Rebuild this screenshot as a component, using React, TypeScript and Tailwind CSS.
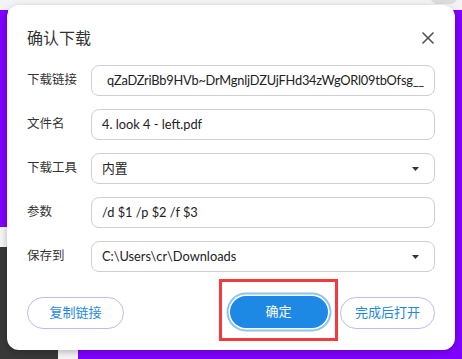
import React from "react";

const font = { fontFamily: '"Noto Sans", "Noto Sans CJK SC", sans-serif' };
const inputFont = { fontFamily: 'Lato, "Noto Sans CJK SC", sans-serif' };

function Caret() {
  return (
    <svg width="7" height="4" viewBox="0 0 7 4" className="shrink-0">
      <path d="M0 0 L7 0 L3.5 4 Z" fill="#333" />
    </svg>
  );
}

function Field({ label, children }: { label: string; children: React.ReactNode }) {
  return (
    <div className="flex items-center">
      <div className="w-[64px] shrink-0 text-[12.5px] text-[#333]">{label}</div>
      <div
        className="flex h-[31px] min-w-0 flex-1 items-center overflow-hidden rounded-[8px] border border-[#cfcfcf] bg-white px-[10px] text-[12.8px] text-[#222]"
        style={inputFont}
      >
        {children}
      </div>
    </div>
  );
}

export default function App() {
  return (
    <div className="relative h-[359px] w-[462px] overflow-hidden bg-[#f3f3f5]" style={font}>
      {/* background windows */}
      <div className="absolute left-0 top-[10px] h-[217px] w-[8px] bg-[#7f00ff]" />
      <div className="absolute left-0 top-[247px] h-[112px] w-[8px] bg-[#383838]" />
      <div className="absolute right-0 top-[10px] h-[349px] w-[10px] bg-[#7f00ff]" />
      <div className="absolute bottom-0 left-[78px] h-[14px] w-[384px] bg-[#7f00ff]" />
      <div className="absolute bottom-0 left-0 h-[30px] w-[58px] bg-[#383838]" />
      <div className="absolute left-[430px] top-[-12px] h-[16px] w-[28px] rounded-full bg-[#dcdcdc]" />

      {/* dialog */}
      <div className="absolute left-[7px] top-[5px] flex h-[345px] w-[448px] flex-col rounded-[12px] bg-white px-[20px] pt-[22px] shadow-[0_2px_6px_rgba(0,0,0,0.25)]">
        <div className="flex h-[22px] items-center justify-between">
          <div className="text-[16px] text-[#333]">确认下载</div>
          <svg width="20" height="20" viewBox="0 0 24 24" fill="none" stroke="#555" strokeWidth="2" strokeLinecap="round" className="mr-[-3px]">
            <path d="M18 6 6 18" />
            <path d="m6 6 12 12" />
          </svg>
        </div>

        <div className="mt-[16px] flex flex-col gap-[13px]">
          <Field label="下载链接">
            <div className="flex w-full justify-end overflow-hidden whitespace-nowrap">
              <span className="tracking-[-0.2px]">qZaDZriBb9HVb~DrMgnljDZUjFHd34zWgORl09tbOfsg__</span>
            </div>
          </Field>
          <Field label="文件名">
            <span>4. look 4 - left.pdf</span>
          </Field>
          <Field label="下载工具">
            <span className="flex-1">内置</span>
            <span className="mr-[5px]"><Caret /></span>
          </Field>
          <Field label="参数">
            <span>/d $1 /p $2 /f $3</span>
          </Field>
          <Field label="保存到">
            <span className="flex-1">C:\Users\cr\Downloads</span>
            <span className="mr-[5px]"><Caret /></span>
          </Field>
        </div>

        <div className="mt-[7px] flex items-start">
          <button className="mt-[18px] flex h-[32px] w-[97px] items-center justify-center rounded-full border border-[#bdbdf5] text-[13px] text-[#1e88e5]">
            复制链接
          </button>
          <div className="ml-[95px] flex h-[62px] w-[119px] justify-center border-[3px] border-[#f23b3b] pt-[14px]">
            <button className="flex h-[32px] w-[98px] items-center justify-center rounded-full bg-[#1e88e5] text-[13px] text-white shadow-[0_0_0_1.5px_#fff,0_0_0_3.5px_#8cc4f2]">
              确定
            </button>
          </div>
          <button className="ml-auto mt-[18px] flex h-[32px] w-[95px] items-center justify-center rounded-full border border-[#bdbdf5] text-[13px] text-[#1e88e5]">
            完成后打开
          </button>
        </div>
      </div>
    </div>
  );
}
